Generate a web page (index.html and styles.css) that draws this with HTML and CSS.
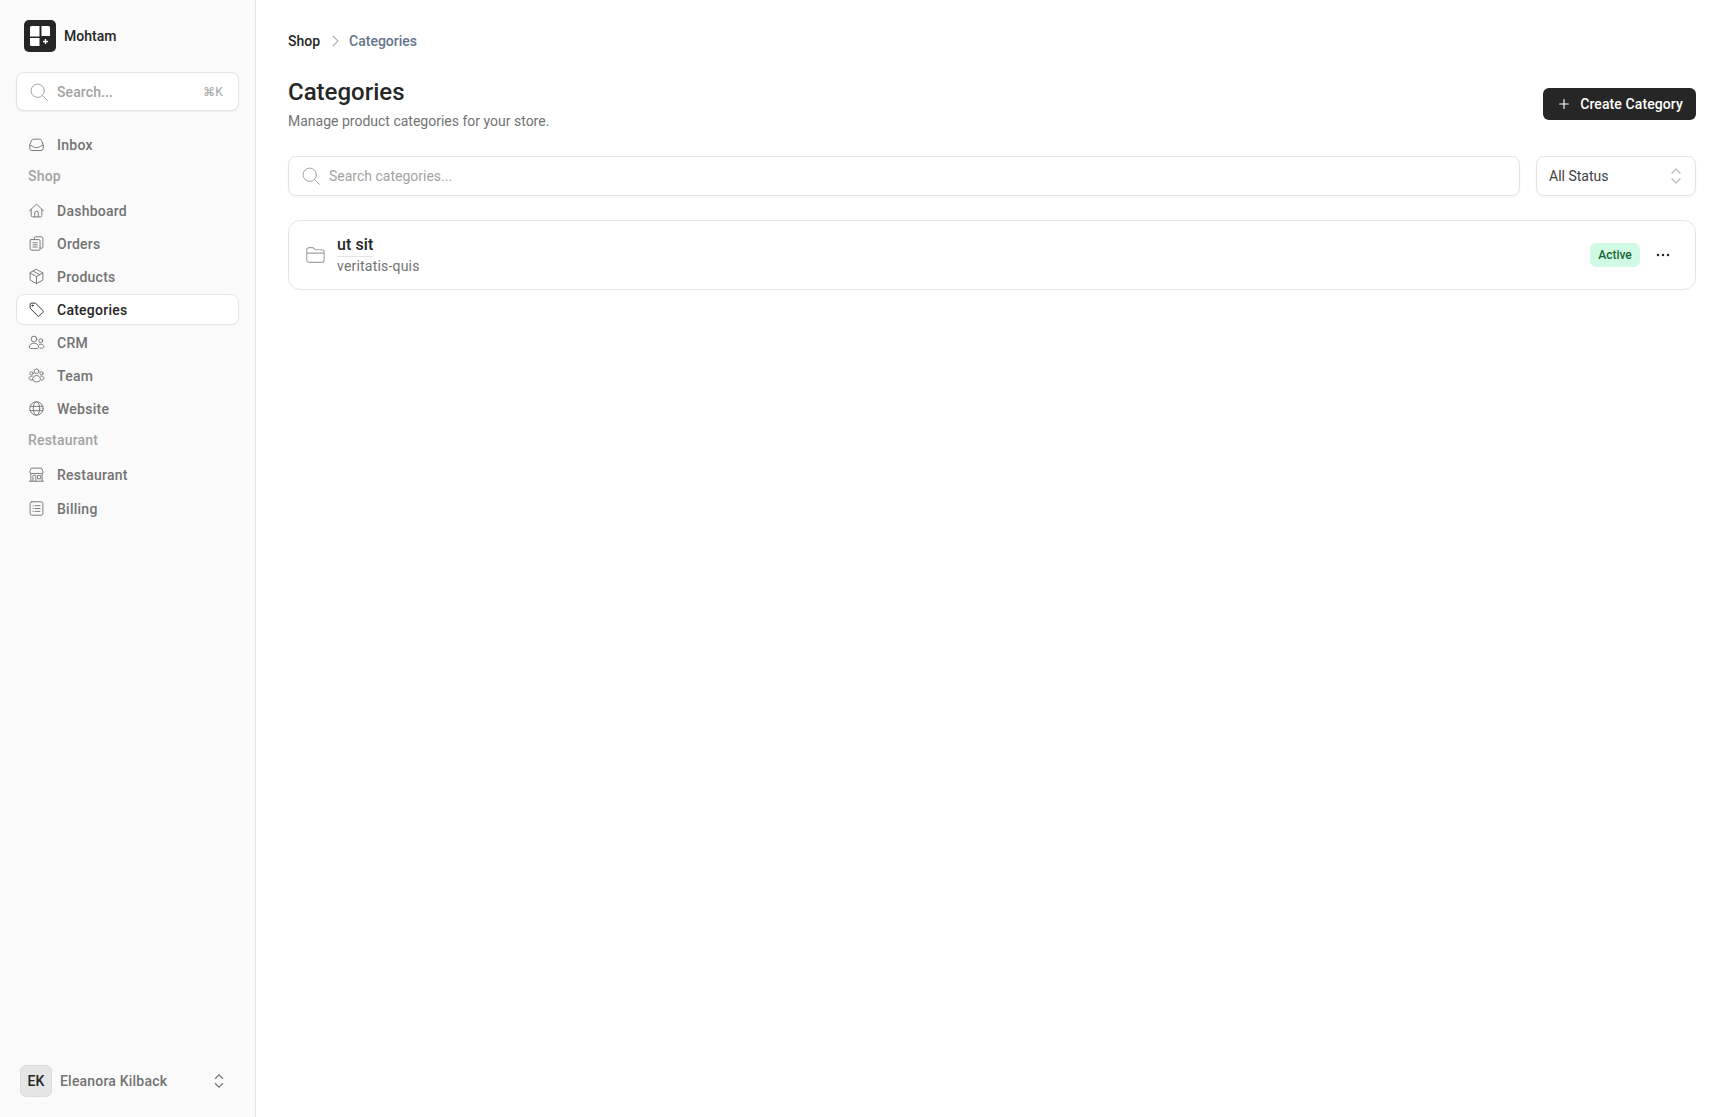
FILE: index.html
```html
<!DOCTYPE html>
<html lang="en">
<head>
<meta charset="utf-8">
<title>Categories</title>
<link rel="stylesheet" href="styles.css">
</head>
<body>
<div class="app">
  <aside class="sidebar">
    <div class="brand">
      <svg class="logo" viewBox="0 0 32 32"><rect width="32" height="32" rx="5" fill="#262626"/><path d="M6 7.500A1.500 1.500 0 0 1 7.500 6H15.500v10.500H6zM17.500 6h7A1.500 1.500 0 0 1 26 7.500V16h-8.500zM6 18h9.500v8H7.500A1.500 1.500 0 0 1 6 24.500z" fill="#fff"/><path d="M21.500 19v5M19 21.500h5" stroke="#fff" stroke-width="1.400"/></svg>
      <span class="brand-name">Mohtam</span>
    </div>
    <div class="side-search">
      <svg class="icon search-ic" viewBox="0 0 24 24"><circle cx="10.500" cy="10.500" r="8"/><path d="m16.500 16.500 5.500 5.500"/></svg>
      <span class="side-search-text">Search...</span>
      <span class="kbd">⌘K</span>
    </div>
    <nav class="nav">
      <a class="item"><svg class="icon" viewBox="0 0 24 24"><path d="M2.500 13v4.500a3 3 0 0 0 3 3h13a3 3 0 0 0 3-3V13l-2.300-6.500A3 3 0 0 0 16.400 4.500H7.600A3 3 0 0 0 4.800 6.500zM2.500 13c3.500 0 4.500 3.500 9.500 3.500s6-3.500 9.500-3.500"/></svg>Inbox</a>
      <div class="label">Shop</div>
      <a class="item"><svg class="icon" viewBox="0 0 24 24"><path d="M2 12.500 12 3l10 9.500M4.500 10.500V19a2 2 0 0 0 2 2h11a2 2 0 0 0 2-2v-8.500M9.500 21v-5.500a2.500 2.500 0 0 1 5 0V21"/></svg>Dashboard</a>
      <a class="item"><svg class="icon" viewBox="0 0 24 24"><path d="M9 6V4a1.500 1.500 0 0 1 1.500-1.500h8A2.500 2.500 0 0 1 21 5v12a1.500 1.500 0 0 1-1.500 1.500H17M4.500 6.500H15.500A1.500 1.500 0 0 1 17 8v12a1.500 1.500 0 0 1-1.500 1.500h-10A2.500 2.500 0 0 1 3 19.500V8a1.500 1.500 0 0 1 1.500-1.500zM7 11h6M7 14h6M7 17h6"/></svg>Orders</a>
      <a class="item"><svg class="icon" viewBox="0 0 24 24"><path d="m12 2 9 5v10l-9 5-9-5V7zM3 7l9 5 9-5M12 12v10M7.500 4.500l9 5"/></svg>Products</a>
      <a class="item active"><svg class="icon dark" viewBox="0 0 24 24"><path d="M3 4.500A1.500 1.500 0 0 1 4.500 3h5.300a2 2 0 0 1 1.400.6l9.700 9.700a2 2 0 0 1 0 2.800l-4.700 4.700a2 2 0 0 1-2.800 0L3.600 10.700a2 2 0 0 1-.6-1.400z"/><circle cx="6.500" cy="6.500" r=".8"/></svg>Categories</a>
      <a class="item"><svg class="icon" viewBox="0 0 24 24"><circle cx="8.500" cy="7" r="4"/><circle cx="18" cy="9.500" r="2.800"/><path d="M2 18.500c0-3.500 3-5.500 6.500-5.500s6.500 2 6.500 5.500c0 1.200-1 2-2.200 2H4.200C3 20.500 2 19.700 2 18.500zM16 14.500c3.500-.8 6.500.8 6.500 3.500 0 1.400-1 2-2.500 2h-3"/></svg>CRM</a>
      <a class="item"><svg class="icon" viewBox="0 0 24 24"><circle cx="12" cy="6" r="3.300"/><circle cx="5" cy="9" r="2.300"/><circle cx="19" cy="9" r="2.300"/><path d="M6.500 17.500c0-3.500 2.500-5.500 5.500-5.500s5.500 2 5.500 5.500c0 2-2.500 3.500-5.500 3.500s-5.500-1.500-5.500-3.500zM6 13H4.500C2.500 13 1.500 14.500 1.500 16c0 1.500 1.500 2.500 4 2.500M18 13h1.500c2 0 3 1.500 3 3 0 1.500-1.500 2.500-4 2.500"/></svg>Team</a>
      <a class="item"><svg class="icon" viewBox="0 0 24 24"><circle cx="12" cy="12" r="9.500"/><ellipse cx="12" cy="12" rx="4.500" ry="9.500"/><path d="M3 9h18M3 15h18"/></svg>Website</a>
      <div class="label">Restaurant</div>
      <a class="item"><svg class="icon" viewBox="0 0 24 24"><path d="M4 10.500V21M20 10.500V21M2 21.500h20M5 3h14l2.500 5.500a2 2 0 0 1-2 2H4.500a2 2 0 0 1-2-2zM7 21v-7a1 1 0 0 1 1-1h2a1 1 0 0 1 1 1v7M14 13.500h4V18h-4z"/></svg>Restaurant</a>
      <a class="item billing"><svg class="icon" viewBox="0 0 24 24"><path d="M5.500 2.500h13a2.500 2.500 0 0 1 2.500 2.500v14a2.500 2.500 0 0 1-2.500 2.500h-13A2.500 2.500 0 0 1 3 19V5a2.500 2.500 0 0 1 2.500-2.500zM10 8h7M10 12h7M10 16h7M7 8h.5M7 12h.5M7 16h.5"/></svg>Billing</a>
    </nav>
    <div class="user">
      <span class="avatar">EK</span>
      <span class="user-name">Eleanora Kilback</span>
      <svg class="chev" viewBox="0 0 16 16"><path d="m4.500 6 3.500-3.500L11.500 6M4.500 10 8 13.500l3.500-3.500"/></svg>
    </div>
  </aside>
  <main class="main">
    <div class="crumbs"><span class="crumb-root">Shop</span><svg class="crumb-sep" viewBox="0 0 16 16"><path d="m6 3.500 4.500 4.500L6 12.500"/></svg><span class="crumb-cur">Categories</span></div>
    <div class="head">
      <div>
        <h1 class="title">Categories</h1>
        <p class="desc">Manage product categories for your store.</p>
      </div>
      <button class="btn"><svg class="plus" viewBox="0 0 16 16"><path d="M8 3v10M3 8h10"/></svg>Create Category</button>
    </div>
    <div class="filters">
      <div class="main-search">
        <svg class="icon search-ic" viewBox="0 0 24 24"><circle cx="10.500" cy="10.500" r="8"/><path d="m16.500 16.500 5.500 5.500"/></svg>
        <span>Search categories...</span>
      </div>
      <div class="select"><span>All Status</span><svg class="sel-chev" viewBox="0 0 16 16"><path d="m4.500 6 3.500-3.500L11.500 6M4.500 10 8 13.500l3.500-3.500"/></svg></div>
    </div>
    <div class="card">
      <svg class="folder" viewBox="0 0 24 24"><path d="M3 6.500A2.500 2.500 0 0 1 5.500 4h3.700a2 2 0 0 1 1.400.6l1 1a2 2 0 0 0 1.400.6h6.500A2.500 2.500 0 0 1 22 8.700v8.800a2.500 2.500 0 0 1-2.500 2.500h-14A2.500 2.500 0 0 1 3 17.500zM3 10h19"/></svg>
      <div class="card-text">
        <span class="card-name">ut sit</span>
        <span class="card-slug">veritatis-quis</span>
      </div>
      <span class="badge">Active</span>
      <svg class="dots" viewBox="0 0 16 16"><circle cx="3" cy="8" r="1.250"/><circle cx="8" cy="8" r="1.250"/><circle cx="13" cy="8" r="1.250"/></svg>
    </div>
  </main>
</div>
</body>
</html>
```
FILE: styles.css
```css
* { box-sizing: border-box; }
html, body { margin: 0; height: 100%; }
body { font-family: "Roboto", "Liberation Sans", sans-serif; background: #fff; color: #262626; }
.app { display: flex; height: 1117px; overflow: hidden; }

.sidebar { width: 256px; flex: none; background: #fafafa; border-right: 1px solid #e5e5e5; display: flex; flex-direction: column; padding: 20px 16px 20px; }
.brand { display: flex; align-items: center; gap: 8px; padding-left: 8px; height: 32px; }
.logo { width: 32px; height: 32px; }
.brand-name { font-size: 14px; font-weight: 500; }

.side-search { margin-top: 20px; height: 39px; background: #fff; border: 1px solid #e5e5e5; border-radius: 8px; box-shadow: 0 1px 2px rgba(0,0,0,.06); display: flex; align-items: center; padding: 0 15px 0 12px; font-size: 14px; font-weight: 500; color: #a3a3a3; letter-spacing: .1px; }
.icon { width: 14px; height: 14px; flex: none; fill: none; stroke: #737373; stroke-width: 1.300; stroke-linecap: round; stroke-linejoin: round; }
.icon.dark { stroke: #262626; }
.search-ic { width: 20px; height: 20px; stroke: #a3a3a3; stroke-width: 1.200; }
.side-search-text { margin-left: 8px; flex: 1; }
.kbd { font-size: 12px; font-weight: 400; }

.nav { margin-top: 18px; display: flex; flex-direction: column; }
.item { height: 31px; margin-bottom: 2px; display: flex; align-items: center; gap: 12px; padding: 0 14px 0 11px; border: 1px solid transparent; border-radius: 8px; font-size: 14px; font-weight: 500; color: #737373; letter-spacing: .25px; }
.item .icon { width: 17px; height: 17px; }
.item.active { color: #262626; background: #fff; border-color: #e5e5e5; box-shadow: 0 1px 1px rgba(0,0,0,.03); }
.item.billing { margin-top: 1px; }
.label { height: 33px; padding: 6px 12px 0; font-size: 14px; font-weight: 500; color: #a3a3a3; line-height: 16px; letter-spacing: .2px; }

.user { margin-top: auto; display: flex; align-items: center; padding: 0 4px; height: 32px; }
.avatar { width: 32px; height: 32px; border-radius: 6px; background: #e5e5e5; border: 1px solid #dcdcdc; display: flex; align-items: center; justify-content: center; font-size: 14px; font-weight: 500; color: #262626; }
.user-name { margin-left: 8px; flex: 1; font-size: 14px; font-weight: 500; color: #737373; letter-spacing: .2px; }
.chev { width: 18px; height: 18px; fill: none; stroke: #737373; stroke-width: 1; margin-right: 7px; }

.main { flex: 1; padding: 32px 32px 0; min-width: 0; }
.crumbs { display: flex; align-items: center; height: 18px; font-size: 14px; font-weight: 500; }
.crumb-root { color: #262626; }
.crumb-sep { width: 18px; height: 18px; margin: 0 5px 0 6px; fill: none; stroke: #a3a3a3; stroke-width: .9; }
.crumb-cur { color: #64748b; }

.head { margin-top: 26px; display: flex; align-items: flex-start; justify-content: space-between; }
.title { margin: 0; font-size: 24px; line-height: 32px; font-weight: 500; }
.desc { margin: 3px 0 0; font-size: 14px; line-height: 20px; color: #737373; }
.btn { height: 32px; width: 153px; margin-top: 12px; background: #262626; color: #fff; border: 0; border-radius: 6px; display: flex; align-items: center; justify-content: flex-end; gap: 9px; padding: 0 13px; font: 500 14px "Roboto", sans-serif; letter-spacing: .1px; }
.plus { width: 14px; height: 14px; fill: none; stroke: #fff; stroke-width: 1.300; stroke-linecap: round; }

.filters { margin-top: 25px; display: flex; gap: 16px; }
.main-search { flex: 1; height: 40px; background: #fff; border: 1px solid #e5e5e5; border-radius: 8px; box-shadow: 0 1px 2px rgba(0,0,0,.05); display: flex; align-items: center; gap: 8px; padding: 0 12px; font-size: 14px; color: #a3a3a3; }
.select { width: 160px; height: 40px; background: #fff; border: 1px solid #e5e5e5; border-radius: 8px; box-shadow: 0 1px 2px rgba(0,0,0,.05); display: flex; align-items: center; justify-content: space-between; padding: 0 9px 0 12px; font-size: 14px; color: #404040; }
.sel-chev { width: 20px; height: 20px; fill: none; stroke: #b5b5b5; stroke-width: .9; }

.card { margin-top: 24px; height: 70px; border: 1px solid #e5e5e5; border-radius: 12px; display: flex; align-items: center; padding: 0 15px; }
.folder { width: 22px; height: 22px; fill: none; stroke: #a3a3a3; stroke-width: 1.200; stroke-linejoin: round; }
.card-text { margin-left: 11px; flex: 1; display: flex; flex-direction: column; align-items: flex-start; }
.card-name { font-size: 16px; line-height: 22px; font-weight: 500; border-bottom: 1px solid #e5e5e5; letter-spacing: .1px; }
.card-slug { font-size: 14px; line-height: 19px; color: #737373; letter-spacing: .2px; }
.badge { height: 24px; width: 50px; border-radius: 6px; background: #d1fae5; color: #166534; display: flex; align-items: center; justify-content: center; font-size: 12px; font-weight: 500; }
.dots { width: 16px; height: 16px; margin-left: 15px; margin-right: 9px; fill: #262626; }
```
